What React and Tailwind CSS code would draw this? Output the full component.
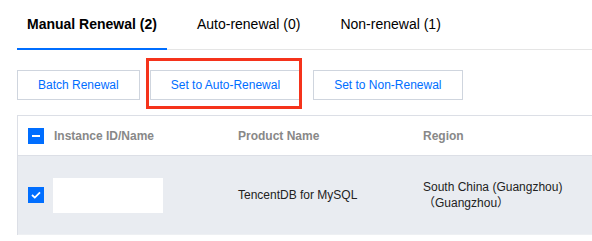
export default function App() {
  const font = { fontFamily: '"Liberation Sans", Arial, "Noto Sans CJK SC", sans-serif' };
  return (
    <div className="w-[592px] h-[241px] overflow-hidden bg-white pl-[17px]" style={font}>
      {/* Tabs */}
      <div className="flex gap-[20px] border-b border-[#e5e5e5] h-[50px] w-[700px]">
        <div className="px-[10px] h-[50px] flex items-center border-b-2 border-[#006eff] text-[14px] font-bold text-[#000]">
          Manual Renewal (2)
        </div>
        <div className="px-[10px] h-[49px] flex items-center text-[14px] text-[#000]">Auto-renewal (0)</div>
        <div className="px-[10px] h-[49px] flex items-center text-[14px] text-[#000]">Non-renewal (1)</div>
      </div>

      {/* Buttons */}
      <div className="flex gap-[10px] mt-[20px]">
        <button className="h-[30px] px-[20px] border border-[#cfd5de] bg-white text-[12px] text-[#006eff]">
          Batch Renewal
        </button>
        <div className="relative">
          <button className="h-[30px] px-[20px] border border-[#cfd5de] bg-white text-[12px] text-[#006eff]">
            Set to Auto-Renewal
          </button>
          <span className="absolute left-[-4px] right-[-1px] top-[-12px] bottom-[-9px] border-[3px] border-[#f5331b] pointer-events-none" />
        </div>
        <button className="ml-[2px] h-[30px] px-[20px] border border-[#cfd5de] bg-white text-[12px] text-[#006eff]">
          Set to Non-Renewal
        </button>
      </div>

      {/* Table */}
      <div className="mt-[15px] w-[700px] border-l border-t border-[#dcdfe6]">
        <div className="flex items-center h-[40px] border-b border-[#dcdfe6] text-[12px] font-bold text-[#888]">
          <div className="w-[36px] pl-[10px] flex items-center">
            <span className="w-[16px] h-[16px] bg-[#006eff] flex items-center justify-center">
              <span className="w-[8px] h-[2px] bg-white" />
            </span>
          </div>
          <div className="w-[184px]">Instance ID/Name</div>
          <div className="w-[185px]">Product Name</div>
          <div>Region</div>
        </div>
        <div className="flex items-center h-[79px] bg-[#e9ecf1] border-b border-[#eef0f3] text-[12px] text-[#222]">
          <div className="w-[35px] pl-[10px] flex items-center">
            <span className="w-[16px] h-[16px] bg-[#006eff] flex items-center justify-center">
              <svg width="10" height="8" viewBox="0 0 10 8" fill="none">
                <path d="M1 4 L3.8 6.6 L9 1.3" stroke="white" strokeWidth="1.8" />
              </svg>
            </span>
          </div>
          <div className="w-[185px]">
            <div className="w-[110px] h-[35px] bg-white" />
          </div>
          <div className="w-[185px]">TencentDB for MySQL</div>
          <div className="leading-[16px] pb-[1px]">
            <div>South China (Guangzhou)</div>
            <div>（Guangzhou）</div>
          </div>
        </div>
      </div>
    </div>
  );
}
